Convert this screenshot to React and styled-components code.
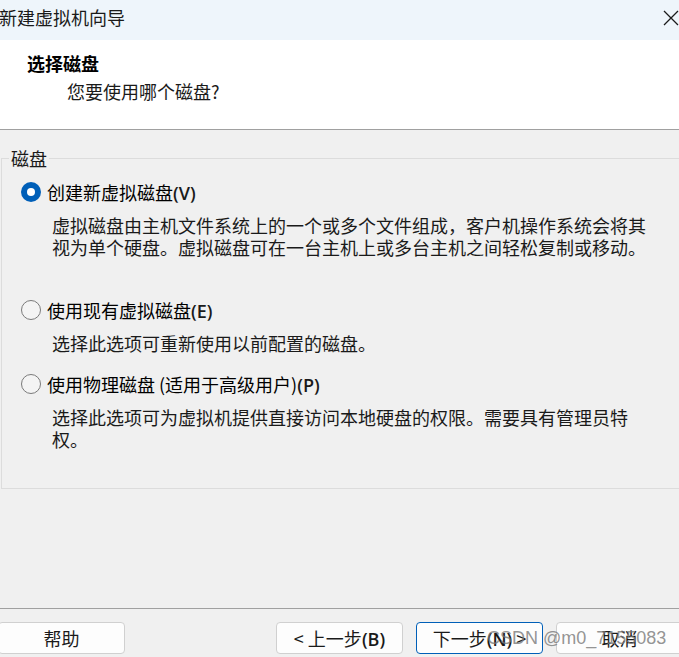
import React from "react";
import styled, { createGlobalStyle } from "styled-components";

const Global = createGlobalStyle`
  html, body { margin: 0; padding: 0; background: #f0f0f0; }
  body { font-family: "Noto Sans CJK SC", "Noto Sans", sans-serif; }
`;

const Window = styled.div`
  position: relative;
  width: 679px;
  height: 657px;
  overflow: hidden;
  display: flex;
  flex-direction: column;
  background: #f0f0f0;
  color: #1a1a1a;
  font-family: "Noto Sans CJK SC", "Noto Sans", sans-serif;
  font-size: 18px;
`;

const TitleBar = styled.div`
  flex: none;
  height: 40px;
  background: #eef5fb;
  display: flex;
  align-items: center;
  justify-content: space-between;
`;

const Title = styled.div`
  margin-left: -1px;
  padding-bottom: 6px;
  font-size: 18px;
  line-height: 24px;
  color: #1a1a1a;
`;

const CloseIcon = styled.svg`
  width: 16px;
  height: 16px;
  margin-bottom: 5px;
  flex: none;
`;

const Header = styled.div`
  flex: none;
  box-sizing: border-box;
  height: 90px;
  background: #ffffff;
  border-bottom: 1px solid #a0a0a0;
  padding: 11px 0 0 27px;
`;

const Heading = styled.div`
  font-weight: 700;
  line-height: 24px;
  color: #000;
`;

const SubHeading = styled.div`
  margin: 4px 0 0 40px;
  line-height: 24px;
  color: #1a1a1a;
`;

const Body = styled.div`
  flex: 1;
  padding: 18px 0 0 1px;
`;

const Group = styled.fieldset`
  margin: 0;
  padding: 13px 0 38px 0;
  width: 720px;
  min-width: 0;
  border: 1px solid #dcdcdc;
`;

const GroupLabel = styled.legend`
  margin-left: 7px;
  padding: 0 2px;
  font-size: 18px;
  line-height: 20px;
  color: #1a1a1a;
`;

const Options = styled.div`
  display: flex;
  flex-direction: column;
  gap: 19px;
  padding-left: 19px;
`;

const OptionBlock = styled.div`
  display: flex;
  flex-direction: column;
`;

const OptionRow = styled.label`
  display: flex;
  align-items: center;
  gap: 6px;
  height: 22px;
  line-height: 22px;
  color: #000;
`;

const Radio = styled.span`
  box-sizing: border-box;
  flex: none;
  width: 20px;
  height: 20px;
  border-radius: 50%;
  position: relative;
  border: ${(p) => (p.$checked ? "none" : "1.5px solid #7a7a7a")};
  background: ${(p) => (p.$checked ? "#005fb8" : "#f4f4f4")};
  &::after {
    content: "";
    display: ${(p) => (p.$checked ? "block" : "none")};
    position: absolute;
    left: 6px;
    top: 6px;
    width: 8px;
    height: 8px;
    border-radius: 50%;
    background: #ffffff;
  }
`;

const Mnemonic = styled.span`
  font-family: "Open Sans", "Noto Sans", sans-serif;
  font-weight: 600;
  color: #1a1a1a;
`;

const Desc = styled.div`
  margin: 11px 0 0 31px;
  width: 600px;
  line-height: 22px;
  min-height: ${(p) => (p.$lines || 1) * 22}px;
  color: #1a1a1a;
  line-break: strict;
`;

const Footer = styled.div`
  flex: none;
  box-sizing: border-box;
  height: 49px;
  border-top: 1px solid #a0a0a0;
  padding-top: 13px;
  display: flex;
  justify-content: space-between;
  align-items: flex-start;
`;

const ButtonGroup = styled.div`
  display: flex;
  gap: 13px;
  margin-right: -4px;
`;

const Button = styled.button`
  box-sizing: border-box;
  width: 127px;
  height: 32px;
  margin-left: ${(p) => p.$offset || 0}px;
  padding: 0;
  border: 1px solid ${(p) => (p.$primary ? "#005fb8" : "#d0d0d0")};
  border-radius: 4px;
  background: #fdfdfd;
  font-family: "Noto Sans CJK SC", "Noto Sans", sans-serif;
  font-size: 18px;
  line-height: 30px;
  color: #1a1a1a;
`;

const Watermark = styled.div`
  position: absolute;
  left: 487px;
  top: 627px;
  font-family: "Liberation Sans", Arial, sans-serif;
  font-size: 18px;
  line-height: 22px;
  color: rgba(120, 120, 120, 0.8);
  pointer-events: none;
  white-space: nowrap;
`;

const options = [
  {
    checked: true,
    label: "创建新虚拟磁盘",
    key: "(V)",
    desc: "虚拟磁盘由主机文件系统上的一个或多个文件组成，客户机操作系统会将其视为单个硬盘。虚拟磁盘可在一台主机上或多台主机之间轻松复制或移动。",
    lines: 3,
  },
  {
    checked: false,
    label: "使用现有虚拟磁盘",
    key: "(E)",
    desc: "选择此选项可重新使用以前配置的磁盘。",
    lines: 1,
  },
  {
    checked: false,
    label: "使用物理磁盘 (适用于高级用户)",
    key: "(P)",
    desc: "选择此选项可为虚拟机提供直接访问本地硬盘的权限。需要具有管理员特权。",
    lines: 2,
  },
];

export default function App() {
  return (
    <>
      <Global />
      <Window>
        <TitleBar>
          <Title>新建虚拟机向导</Title>
          <CloseIcon viewBox="0 0 16 16">
            <path d="M1 1 L15 15 M15 1 L1 15" stroke="#1a1a1a" strokeWidth="1.3" fill="none" />
          </CloseIcon>
        </TitleBar>
        <Header>
          <Heading>选择磁盘</Heading>
          <SubHeading>您要使用哪个磁盘?</SubHeading>
        </Header>
        <Body>
          <Group>
            <GroupLabel>磁盘</GroupLabel>
            <Options>
              {options.map((o) => (
                <OptionBlock key={o.key}>
                  <OptionRow>
                    <Radio $checked={o.checked} />
                    <span>
                      {o.label}
                      <Mnemonic>{o.key}</Mnemonic>
                    </span>
                  </OptionRow>
                  <Desc $lines={o.lines}>{o.desc}</Desc>
                </OptionBlock>
              ))}
            </Options>
          </Group>
        </Body>
        <Footer>
          <Button $offset={-2}>帮助</Button>
          <ButtonGroup>
            <Button>&lt; 上一步<Mnemonic>(B)</Mnemonic></Button>
            <Button $primary>下一步<Mnemonic>(N)</Mnemonic> &gt;</Button>
            <Button>取消</Button>
          </ButtonGroup>
        </Footer>
        <Watermark>CSDN @m0_7155083</Watermark>
      </Window>
    </>
  );
}
